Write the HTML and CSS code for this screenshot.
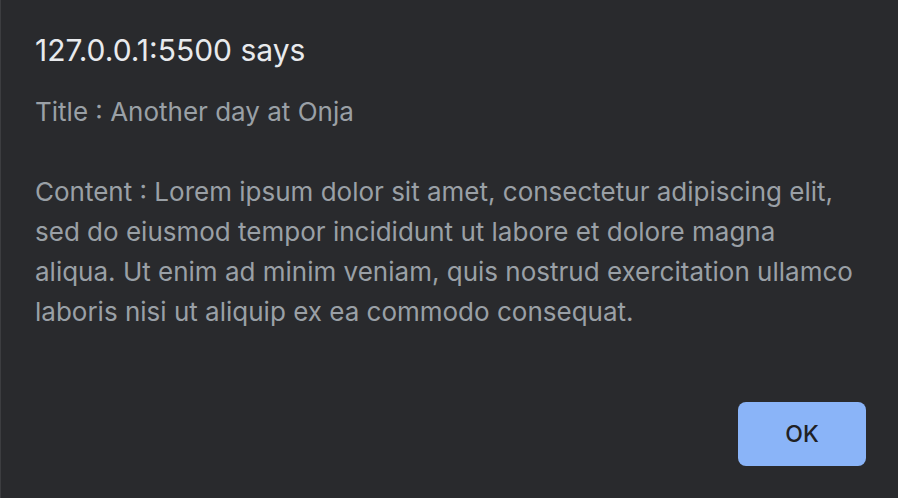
FILE: index.html
```html
<!DOCTYPE html>
<html>
<head>
<meta charset="utf-8">
<link rel="stylesheet" href="styles.css">
</head>
<body>
<div class="dialog">
  <h1 class="origin">127.0.0.1:5500 says</h1>
  <div class="message">
    <p>Title : Another day at Onja</p>
    <p>Content : Lorem ipsum dolor sit amet, consectetur adipiscing elit, sed do eiusmod tempor incididunt ut labore et dolore magna aliqua. Ut enim ad minim veniam, quis nostrud exercitation ullamco laboris nisi ut aliquip ex ea commodo consequat.</p>
  </div>
  <div class="actions">
    <button class="ok">OK</button>
  </div>
</div>
</body>
</html>
```

FILE: styles.css
```css
html, body {
  margin: 0;
  height: 100%;
  background: #292a2d;
}
body {
  font-family: Inter, "Noto Sans", sans-serif;
}
.dialog {
  box-sizing: border-box;
  height: 498px;
  padding: 32px 32px 32px 34px;
  display: flex;
  flex-direction: column;
  border-left: 1px solid #3c3d40;
}
.origin {
  margin: 0;
  font-size: 30px;
  line-height: 36px;
  font-weight: 400;
  color: #e8eaed;
}
.message {
  margin-top: 24px;
  color: #9aa0a6;
  font-size: 26px;
  line-height: 40px;
  width: 824px;
}
.message p {
  margin: 0;
}
.message p + p {
  margin-top: 40px;
}
.actions {
  margin-top: auto;
  display: flex;
  justify-content: flex-end;
}
.ok {
  width: 128px;
  height: 64px;
  border: none;
  border-radius: 8px;
  background: #8ab4f8;
  color: #202124;
  font-family: Inter, "Noto Sans", sans-serif;
  font-size: 23px;
  font-weight: 500;
}
```
